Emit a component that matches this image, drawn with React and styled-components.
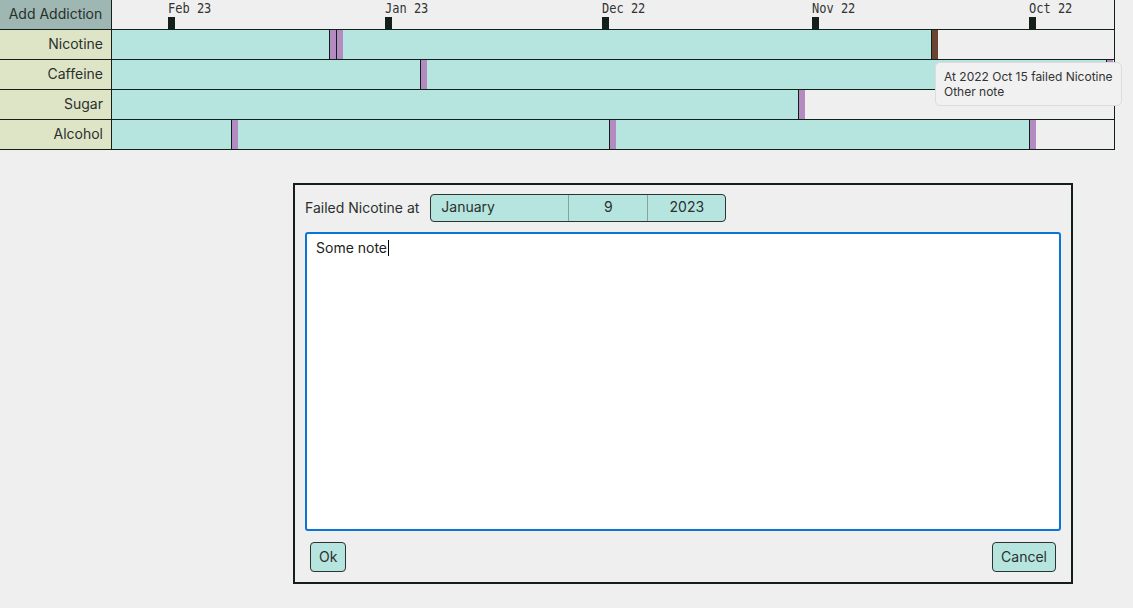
import React from 'react';
import styled, { createGlobalStyle } from 'styled-components';

const DAY = 7;
const LINE = '#13201a';
const TEAL = '#b6e4de';

const GlobalStyle = createGlobalStyle`
  body {
    margin: 0;
    background: #efefef;
    font-family: Inter, "Noto Sans", sans-serif;
    color: #2b302e;
  }
`;

const months = [
  { label: 'Feb 23', days: 31 },
  { label: 'Jan 23', days: 31 },
  { label: 'Dec 22', days: 30 },
  { label: 'Nov 22', days: 31 },
  { label: 'Oct 22', days: 31 },
];

const addictions = [
  { name: 'Nicotine', fails: [{ day: 31 }, { day: 32 }, { day: 117, active: true }] },
  { name: 'Caffeine', fails: [{ day: 44 }, { day: 142 }] },
  { name: 'Sugar', fails: [{ day: 98 }] },
  { name: 'Alcohol', fails: [{ day: 17 }, { day: 71 }, { day: 131 }] },
];

const Timeline = styled.div`
  position: relative;
  width: 1115px;
`;

const Row = styled.div`
  display: flex;
  height: 29px;
  border-bottom: 1px solid ${LINE};
`;

const AddButton = styled.button`
  width: 112px;
  height: 29px;
  padding: 0 0 2px;
  border: none;
  border-right: 1px solid ${LINE};
  background: #9fb7b2;
  font-family: Inter, sans-serif;
  font-size: 14px;
  color: #26302d;
  cursor: pointer;
`;

const Name = styled.div`
  width: 103px;
  padding-right: 8px;
  border-right: 1px solid ${LINE};
  background: #dee5c7;
  font-size: 14px;
  line-height: 27px;
  text-align: right;
`;

const Track = styled.div`
  display: flex;
  width: 1002px;
  border-right: 1px solid ${LINE};
  overflow: hidden;
`;

const Lead = styled.div`
  flex: none;
`;

const Month = styled.div`
  flex: none;
  display: flex;
  flex-direction: column;
  justify-content: space-between;
  align-items: flex-start;
`;

const MonthLabel = styled.span`
  font-family: "DejaVu Sans Mono", monospace;
  font-size: 12px;
  line-height: 14px;
  color: #333;
  white-space: nowrap;
  transform: scaleY(1.18);
  transform-origin: left top;
`;

const Tick = styled.span`
  width: 7px;
  height: 12px;
  background: ${LINE};
`;

const Bar = styled.div`
  flex: none;
  background: ${TEAL};
`;

const Mark = styled.div`
  flex: none;
  width: 6px;
  border-left: 1px solid ${LINE};
  background: ${(p) => (p.$active ? '#6b4331' : '#b48bc0')};
`;

const Tooltip = styled.div`
  position: absolute;
  left: 935px;
  top: 62px;
  padding: 6px 8px;
  background: #f1f1f1;
  border: 1px solid #dcdcdc;
  border-radius: 5px;
  font-size: 12px;
  line-height: 15px;
  color: #333;
  white-space: nowrap;
`;

const Dialog = styled.div`
  box-sizing: border-box;
  width: 780px;
  height: 401px;
  margin: 33px 0 0 293px;
  padding: 9px 10px 10px;
  border: 2px solid ${LINE};
  display: flex;
  flex-direction: column;
  gap: 10px;
`;

const DateRow = styled.div`
  display: flex;
  align-items: center;
  gap: 10px;
  font-size: 14px;
  line-height: 16px;
`;

const DateGroup = styled.div`
  display: flex;
  height: 26px;
  margin-left: 1px;
  border: 1px solid #2c3430;
  border-radius: 4px;
  background: ${TEAL};
  overflow: hidden;
`;

const DatePart = styled.span`
  box-sizing: border-box;
  width: ${(p) => p.$w}px;
  padding-left: ${(p) => (p.$left ? '10px' : '0')};
  text-align: ${(p) => (p.$left ? 'left' : 'center')};
  line-height: 24px;
  font-size: 14px;
  & + & {
    border-left: 1px solid #86a39d;
  }
`;

const Note = styled.div`
  flex: 1;
  box-sizing: border-box;
  padding: 5px 9px;
  background: #fff;
  border: 2px solid #0b74d9;
  border-radius: 3px;
  font-size: 14px;
  line-height: 18px;
  color: #222;
`;

const Caret = styled.span`
  display: inline-block;
  width: 1px;
  height: 16px;
  margin-left: 1px;
  vertical-align: -3px;
  background: #000;
`;

const Actions = styled.div`
  display: flex;
  justify-content: space-between;
  padding: 1px 5px 0;
`;

const Button = styled.button`
  height: 30px;
  padding: 0 8px 1px;
  border: 1px solid #2c3430;
  border-radius: 4px;
  background: ${TEAL};
  font-family: Inter, sans-serif;
  font-size: 14px;
  color: #2b302e;
  cursor: pointer;
`;

function segments(fails) {
  const out = [];
  let prev = 0;
  fails.forEach((f, i) => {
    if (f.day > prev) out.push(<Bar key={'b' + i} style={{ width: (f.day - prev) * DAY }} />);
    out.push(<Mark key={'m' + i} $active={f.active} />);
    prev = f.day + 1;
  });
  return out;
}

export default function App() {
  return (
    <>
      <GlobalStyle />
      <Timeline>
        <Row>
          <AddButton>Add Addiction</AddButton>
          <Track>
            <Lead style={{ width: 8 * DAY }} />
            {months.map((m) => (
              <Month key={m.label} style={{ width: m.days * DAY }}>
                <MonthLabel>{m.label}</MonthLabel>
                <Tick />
              </Month>
            ))}
          </Track>
        </Row>
        {addictions.map((a) => (
          <Row key={a.name}>
            <Name>{a.name}</Name>
            <Track>{segments(a.fails)}</Track>
          </Row>
        ))}
        <Tooltip>
          At 2022 Oct 15 failed Nicotine
          <br />
          Other note
        </Tooltip>
      </Timeline>

      <Dialog>
        <DateRow>
          Failed Nicotine at
          <DateGroup>
            <DatePart $w={137} $left>January</DatePart>
            <DatePart $w={79}>9</DatePart>
            <DatePart $w={78}>2023</DatePart>
          </DateGroup>
        </DateRow>
        <Note>
          Some note<Caret />
        </Note>
        <Actions>
          <Button>Ok</Button>
          <Button>Cancel</Button>
        </Actions>
      </Dialog>
    </>
  );
}
